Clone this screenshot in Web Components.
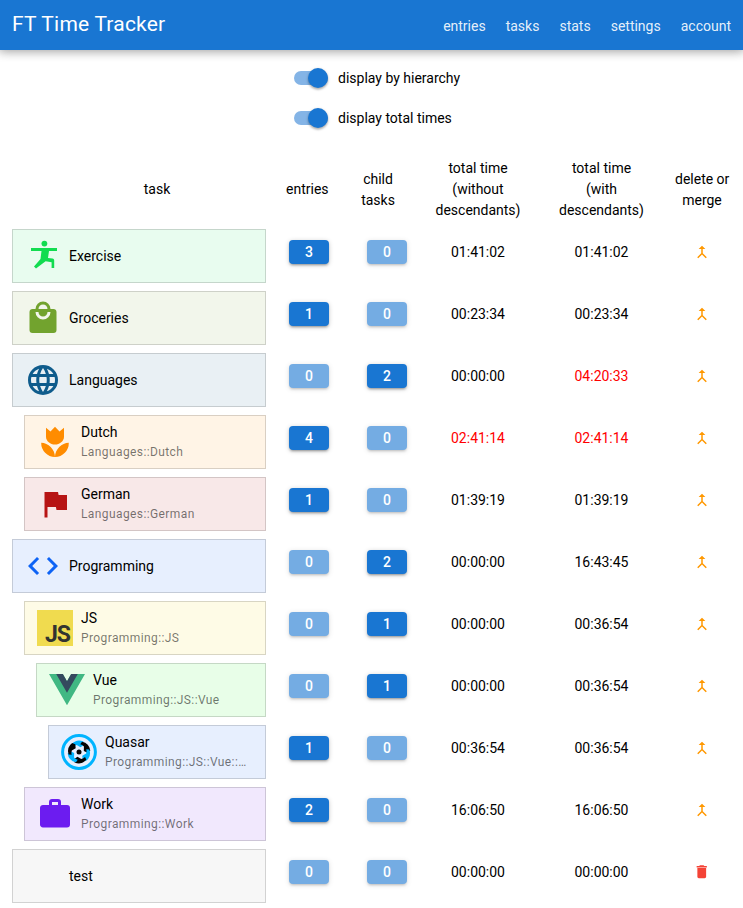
<!DOCTYPE html>
<html><head><meta charset="utf-8"><title>FT Time Tracker</title>
<style>html,body{margin:0;padding:0;background:#fff;color:#000;font:14px/21px Roboto,"Liberation Sans",sans-serif}</style>
</head><body>
<ft-app></ft-app>
<script>
const ICONS={
exercise:`<svg viewBox="0 0 36 36" width="36" height="36" fill="#12dc50"><circle cx="19.4" cy="5.6" r="2.9"/><path d="M6 10h26v3h-8l-1 7 4.5.6c1.2.2 1.7.9 1.7 1.9V30h-2.6v-5.8l-6-1L11 30.6l-2-2L15.5 21l1-8H6z"/></svg>`,
groceries:`<svg viewBox="0 0 24 24" width="36" height="36" fill="#72a32e"><path d="M12,13A5,5 0 0,1 7,8H9A3,3 0 0,0 12,11A3,3 0 0,0 15,8H17A5,5 0 0,1 12,13M12,3A3,3 0 0,1 15,6H9A3,3 0 0,1 12,3M19,6H17A5,5 0 0,0 12,1A5,5 0 0,0 7,6H5C3.89,6 3,6.89 3,8V20A2,2 0 0,0 5,22H19A2,2 0 0,0 21,20V8C21,6.89 20.1,6 19,6Z"/></svg>`,
globe:`<svg viewBox="0 0 24 24" width="36" height="36" fill="#0f5c8c"><path d="M16.36,14C16.44,13.34 16.5,12.68 16.5,12C16.5,11.32 16.44,10.66 16.36,10H19.74C19.9,10.64 20,11.31 20,12C20,12.69 19.9,13.36 19.74,14M14.59,19.56C15.19,18.45 15.65,17.25 15.97,16H18.92C17.96,17.65 16.43,18.93 14.59,19.56M14.34,14H9.66C9.56,13.34 9.5,12.68 9.5,12C9.5,11.32 9.56,10.65 9.66,10H14.34C14.43,10.65 14.5,11.32 14.5,12C14.5,12.68 14.43,13.34 14.34,14M12,19.96C11.17,18.76 10.5,17.43 10.09,16H13.91C13.5,17.43 12.83,18.76 12,19.96M8,8H5.08C6.03,6.34 7.57,5.06 9.4,4.44C8.8,5.55 8.35,6.75 8,8M5.08,16H8C8.35,17.25 8.8,18.45 9.4,19.56C7.57,18.93 6.03,17.65 5.08,16M4.26,14C4.1,13.36 4,12.69 4,12C4,11.31 4.1,10.64 4.26,10H7.64C7.56,10.66 7.5,11.32 7.5,12C7.5,12.68 7.56,13.34 7.64,14M12,4.03C12.83,5.23 13.5,6.57 13.91,8H10.09C10.5,6.57 11.17,5.23 12,4.03M18.92,8H15.97C15.65,6.75 15.19,5.55 14.59,4.44C16.43,5.07 17.96,6.34 18.92,8M12,2C6.47,2 2,6.5 2,12A10,10 0 0,0 12,22A10,10 0 0,0 22,12A10,10 0 0,0 12,2Z"/></svg>`,
tulip:`<svg viewBox="0 0 24 24" width="36" height="36" fill="#ff8c00"><path d="M2.8,12.5C7.5,12.5 12,17 12,22A9.3,9.3 0 0,1 2.8,12.5M21.2,12.5C16.5,12.5 12,17 12,22A9.3,9.3 0 0,0 21.2,12.5M6,2.5L9,5 12,1.8 15,5 18,2.5V8.5C18,11.5 15,13.7 12,13.7 9,13.7 6,11.5 6,8.5Z"/></svg>`,
flag:`<svg viewBox="0 0 24 24" width="36" height="36" fill="#b71414"><path d="M14.4,6L14,4H5V21H7V14H12.6L13,16H20V6H14.4Z"/></svg>`,
code:`<svg viewBox="0 0 24 24" width="36" height="36" fill="#0d63f5"><path d="M14.6,16.6L19.2,12L14.6,7.4L16,6L22,12L16,18L14.6,16.6M9.4,16.6L4.8,12L9.4,7.4L8,6L2,12L8,18L9.4,16.6Z"/></svg>`,
js:`<div class="js">JS</div>`,
vue:`<svg viewBox="0 0 261.76 226.69" width="36" height="31.2"><path fill="#41b883" d="M161.096.001l-30.225 52.351L100.647.001H-.005l130.876 226.688L261.749.001z"/><path fill="#34495e" d="M161.096.001l-30.225 52.351L100.647.001H52.346l78.525 136.01L209.398.001z"/></svg>`,
quasar:`<svg viewBox="0 0 36 36" width="36" height="36"><circle cx="18" cy="18" r="16.4" fill="none" stroke="#00b4ff" stroke-width="3"/><circle cx="18" cy="18" r="2.5" fill="#050505"/>${[0,60,120,180,240,300].map((a,i)=>`<path transform="rotate(${a-6} 18 18)" fill="${i%2?'#050505':'#00b4ff'}" d="M11.5 9.5Q17 4.5 23.5 8L23.5 11.5 20 13.5 16.5 10.8Q14 11 12.5 12.5Z"/>`).join('')}</svg>`,
work:`<svg viewBox="0 0 24 24" width="36" height="36" fill="#6c1cf0"><path d="M10,2H14A2,2 0 0,1 16,4V6H20A2,2 0 0,1 22,8V19A2,2 0 0,1 20,21H4C2.89,21 2,20.1 2,19V8C2,6.89 2.89,6 4,6H8V4C8,2.89 8.89,2 10,2M14,6V4H10V6H14Z"/></svg>`,
none:``
};
const define=(n,html)=>{customElements.define(n,class extends HTMLElement{
  connectedCallback(){ if(this.shadowRoot) return; const r=this.attachShadow({mode:'open'}); r.innerHTML=typeof html==='function'?html(this):html; }
});};
define('ft-header',`<style>
:host{display:flex;align-items:center;height:50px;background:#1976d2;color:#fff;padding:0 12px;box-shadow:0 0 10px 2px rgba(0,0,0,.2),0 0 10px rgba(0,0,0,.24);position:relative;z-index:1}
.t{flex:1;font-size:21px;letter-spacing:.21px;line-height:1;padding-bottom:1px}
nav{display:flex;gap:20px;margin-top:3px;color:rgba(255,255,255,.9)}
</style><div class="t">FT Time Tracker</div><nav><span>entries</span><span>tasks</span><span>stats</span><span>settings</span><span>account</span></nav>`);
define('ft-toggle',e=>`<style>
:host{display:flex;align-items:center;height:40px;gap:10px}
.tr{position:relative;width:34px;height:14px;border-radius:7px;background:#84b4e6}
.k{position:absolute;right:0;top:-3px;width:20px;height:20px;border-radius:50%;background:#1976d2;box-shadow:0 1px 3px rgba(0,0,0,.25),0 2px 2px rgba(0,0,0,.14)}
</style><div class="tr"><div class="k"></div></div><span>${e.getAttribute('label')}</span>`);
define('ft-toggles',`<style>:host{display:block;padding:8px 0 19px 294px}</style><slot></slot>`);
define('ft-head',`<style>
:host{display:grid;grid-template-columns:258px 42px 100px 100px 147px 54px;padding-left:28px;height:64px;align-items:center;text-align:center;white-space:nowrap}
.two{margin-top:2px}
</style><span>task</span><span>entries</span><span class="two">child<br>tasks</span><span>total time<br>(without<br>descendants)</span><span>total time<br>(with<br>descendants)</span><span class="two">delete or<br>merge</span>`);
define('count-badge',`<style>
:host{display:block;width:40px;height:24px;line-height:24px;text-align:center;border-radius:4px;background:#1976d2;color:#fff;font-weight:500;box-shadow:0 1px 5px rgba(0,0,0,.2),0 2px 2px rgba(0,0,0,.14),0 3px 1px -2px rgba(0,0,0,.12)}
:host([off]){opacity:.6}
</style><slot></slot>`);
define('task-row',e=>{
 const a=n=>e.getAttribute(n)||'';const lvl=+a('level')||0;
 const red=n=>a(n+'r')?'style="color:#f00"':'';
 const act=a('del')?`<svg width="17.5" height="17.5" viewBox="0 0 24 24" fill="#f44336"><path d="M6 19c0 1.1.9 2 2 2h8c1.1 0 2-.9 2-2V7H6v12zM19 4h-3.5l-1-1h-5l-1 1H5v2h14V4z"/></svg>`
  :`<svg width="18" height="18" viewBox="0 0 24 24" fill="#ff9800"><path d="M18.41 19L17 20.41 12 15.41 7 20.41 5.59 19 11 13.59V8H7.5L12 3.5 16.5 8H13V13.59Z"/></svg>`;
 return `<style>
:host{display:grid;grid-template-columns:266px 86px 70px 112px 135px 66px;height:62px;align-items:center;justify-items:center}
.cw{justify-self:stretch;align-self:stretch;padding:8px 0 0 ${12+lvl*12}px;min-width:0}
.card{box-sizing:border-box;height:54px;display:flex;align-items:center;gap:8px;padding:0 15px 0 12px;border:1px solid rgba(0,0,0,.15);background:${a('bg')}}
.ic{flex:none;width:36px;height:36px;display:flex;align-items:center;justify-content:center}
.js{box-sizing:border-box;width:36px;height:36px;background:#f0db4f;color:#323330;font-weight:700;font-size:23px;line-height:22px;padding-top:14px;text-align:right;letter-spacing:-1px;padding-right:3px}
svg{display:block}
.tx{min-width:0;flex:1}
.n{line-height:20px}
.s{line-height:20px;font-size:12px;letter-spacing:.4px;color:rgba(0,0,0,.54);white-space:nowrap;overflow:hidden;text-overflow:ellipsis}
.a{display:flex}
</style>
<div class="cw"><div class="card"><div class="ic">${ICONS[a('icon')]||''}</div><div class="tx"><div class="n">${a('name')}</div>${a('path')?`<div class="s">${a('path')}</div>`:''}</div></div></div>
<count-badge ${+a('e')?'':'off'}>${a('e')}</count-badge>
<count-badge ${+a('c')?'':'off'}>${a('c')}</count-badge>
<span ${red('t1')}>${a('t1')}</span>
<span ${red('t2')}>${a('t2')}</span>
<div class="a">${act}</div>`;
});
const rows=[
['Exercise','',0,'exercise','#e8fcef',3,0,'01:41:02','01:41:02'],
['Groceries','',0,'groceries','#f2f6eb',1,0,'00:23:34','00:23:34'],
['Languages','',0,'globe','#e9f0f4',0,2,'00:00:00','04:20:33','','r'],
['Dutch','Languages::Dutch',1,'tulip','#fff4e6',4,0,'02:41:14','02:41:14','r','r'],
['German','Languages::German',1,'flag','#f8e8e8',1,0,'01:39:19','01:39:19'],
['Programming','',0,'code','#e7effe',0,2,'00:00:00','16:43:45'],
['JS','Programming::JS',1,'js','#fefbe6',0,1,'00:00:00','00:36:54'],
['Vue','Programming::JS::Vue',2,'vue','#e8fee8',0,1,'00:00:00','00:36:54'],
['Quasar','Programming::JS::Vue::Quasar',3,'quasar','#e7effe',1,0,'00:36:54','00:36:54'],
['Work','Programming::Work',1,'work','#f1e8fd',2,0,'16:06:50','16:06:50'],
['test','',0,'none','#f7f7f7',0,0,'00:00:00','00:00:00','','','del']];
define('ft-app',`<style>:host{display:block;height:908px;overflow:hidden}</style>
<ft-header></ft-header>
<ft-toggles><ft-toggle label="display by hierarchy"></ft-toggle><ft-toggle label="display total times"></ft-toggle></ft-toggles>
<ft-head></ft-head>
${rows.map(r=>`<task-row name="${r[0]}" path="${r[1]}" level="${r[2]}" icon="${r[3]}" bg="${r[4]}" e="${r[5]}" c="${r[6]}" t1="${r[7]}" t2="${r[8]}" t1r="${r[9]||''}" t2r="${r[10]||''}" del="${r[11]||''}"></task-row>`).join('')}`);
</script>
</body></html>
